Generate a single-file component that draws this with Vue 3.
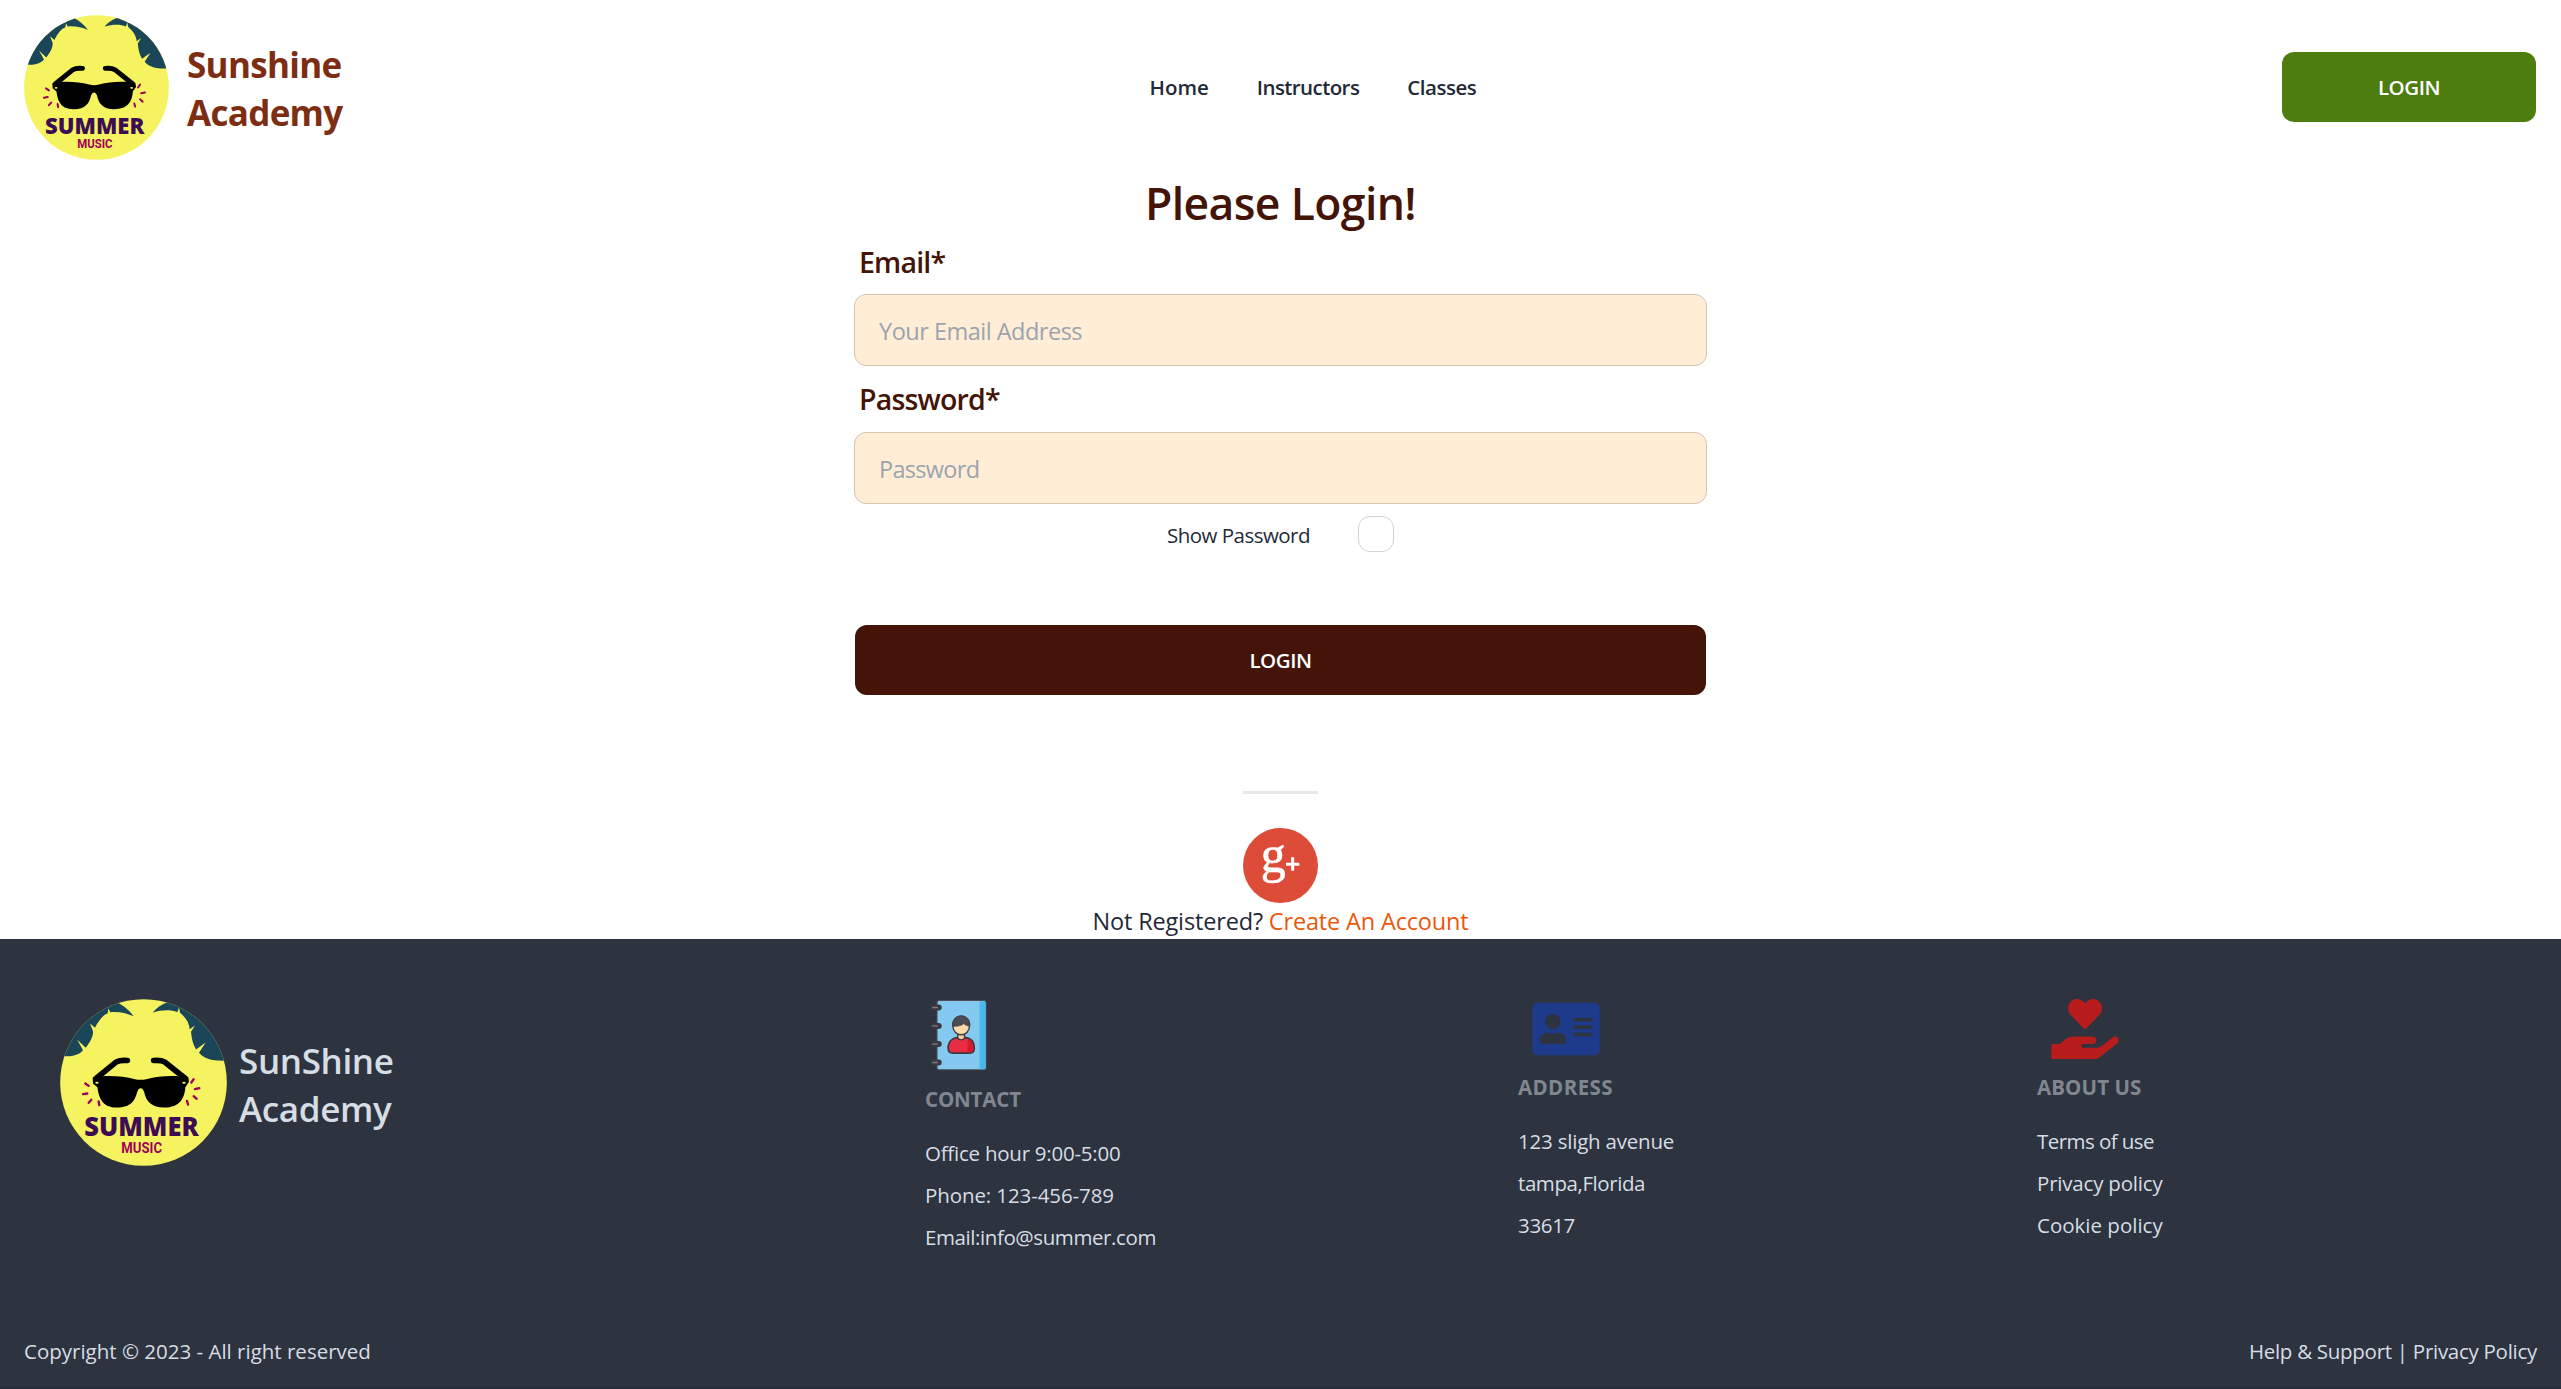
<script setup>
import { ref, h } from 'vue'

const navLinks = [
  { text: 'Home', fit: 'fit-home' },
  { text: 'Instructors', fit: 'fit-instructors' },
  { text: 'Classes', fit: 'fit-classes' },
]
const email = ref('')
const password = ref('')

const yellow = '#f5f35f'
const magenta = '#a0005a'

const SunLogo = () =>
  h('svg', { viewBox: '60 56 501 500', width: '100%', height: '100%', style: 'display:block', 'aria-label': 'Summer Music' }, [
    h('clipPath', { id: 'disc' }, [h('circle', { cx: 310.5, cy: 306, r: 250 })]),
    h('circle', { cx: 310.5, cy: 306, r: 250, fill: yellow }),
    h('g', { 'clip-path': 'url(#disc)', fill: '#1a4658' }, [
      h('path', { d: 'M50 224C85 231 115 226 129 209L112 178L137 202C153 182 160 166 159 152L150 129L165 142C177 118 190 103 203 98L205 84L211 95C238 93 258 98 281 107C266 88 252 76 232 66L50 30Z' }),
      h('path', { d: 'M338 96C368 87 394 88 412 95L417 81L420 97C438 112 448 128 449 146L465 135L453 154C455 176 459 192 468 207L497 186L477 217C494 237 520 243 570 240L570 30L380 66C362 73 349 83 338 96Z' }),
    ]),
    h('g', { fill: 'none', stroke: '#000', 'stroke-width': 17, 'stroke-linecap': 'round', 'stroke-linejoin': 'round' }, [
      h('path', { d: 'M262 240Q240 238 228 245L168 294' }),
      h('path', { d: 'M341 240Q363 238 375 245L436 294' }),
    ]),
    h('path', { d: 'M158 291C195 283 245 285 285 296Q302 300 319 296C358 285 410 283 445 291L447 304L436 320C434 352 420 381 372 381C332 381 318 360 313 336Q309 323 302 323Q295 323 291 336C285 360 273 381 231 381C186 381 177 352 172 320L159 309Z' }),
    h('ellipse', { cx: 171, cy: 307, rx: 5, ry: 3, fill: yellow }),
    h('ellipse', { cx: 432, cy: 307, rx: 5, ry: 3, fill: yellow }),
    h('path', { d: 'M136 309L146 316M129 341L142 339M154 358L146 367M176 363L178 374M461 296L454 306M465 326L478 323M461 347L470 355M441 361L444 372', stroke: magenta, 'stroke-width': 7, 'stroke-linecap': 'round' }),
    h('text', { x: 133, y: 465, 'font-size': 80, 'font-weight': 800, textLength: 343, lengthAdjust: 'spacingAndGlyphs', fill: '#3c0d54', 'font-family': 'Open Sans, sans-serif' }, 'SUMMER'),
    h('text', { x: 244, y: 516, 'font-size': 43, 'font-weight': 700, textLength: 122, lengthAdjust: 'spacingAndGlyphs', fill: magenta, 'font-family': 'Roboto, sans-serif' }, 'MUSIC'),
  ])
</script>

<template>
  <div class="page">
    <header class="top">
      <a class="brand">
        <span class="logo"><SunLogo /></span>
        <span class="brand-name">Sunshine<br />Academy</span>
      </a>
      <nav class="links">
        <a v-for="l in navLinks" :key="l.text" :class="l.fit">{{ l.text }}</a>
      </nav>
      <button class="btn btn-green">LOGIN</button>
    </header>

    <main class="login">
      <h1>Please Login!</h1>
      <label class="lab" for="email">Email*</label>
      <input id="email" v-model="email" type="text" placeholder="Your Email Address" />
      <label class="lab lab2" for="password">Password*</label>
      <input id="password" v-model="password" class="pw" type="text" placeholder="Password" />
      <div class="show">
        <span class="show-text">Show Password</span>
        <i class="check"></i>
      </div>
      <button class="btn btn-brown">LOGIN</button>
      <div class="rule"></div>
      <svg class="gplus" viewBox="0 0 225 225">
        <circle cx="112.500" cy="112.500" r="112.500" fill="#dd4b39" />
        <text x="53" y="133" font-size="158" font-family="Liberation Serif, serif" fill="#fff" stroke="#fff" stroke-width="2" textLength="75" lengthAdjust="spacingAndGlyphs">g</text>
        <path d="M129 108.500h40M149 88v40" stroke="#fff" stroke-width="9" />
      </svg>
      <p class="register">Not Registered? <a>Create An Account</a></p>
    </main>

    <footer>
      <div class="cols">
        <div class="fbrand">
          <span class="flogo"><SunLogo /></span>
          <span class="fname">SunShine<br />Academy</span>
        </div>
        <section class="contact">
          <svg class="book" viewBox="90 58 170 214">
            <rect x="111" y="62" width="146" height="207" rx="6" fill="#84c9ef" stroke="#4b4f5a" stroke-width="3" />
            <path d="M238 64h13q5 0 5 5v193q0 5-5 5h-13z" fill="#4ab8ec" />
            <g fill="#3a3942">
              <rect v-for="y in [83, 138, 192, 247]" :key="y" x="93" :y="y - 9" width="32" height="18" rx="9" />
            </g>
            <g fill="#7d7a80">
              <rect v-for="y in [83, 138, 192, 247]" :key="y" x="96" :y="y - 2" width="18" height="4" rx="2" />
            </g>
            <path d="M144 204c0-20 13-31 31-32v-8h16v8c19 1 31 12 31 32 0 10-5 15-13 15h-51c-9 0-14-5-14-15z" fill="#e82c43" stroke="#3a3942" stroke-width="5" />
            <path d="M203 176c12 5 17 15 17 28 0 8-4 13-10 13h-9z" fill="#d71929" />
            <path d="M173 164h20v11q-10 9-20 0z" fill="#fbd09b" stroke="#3a3942" stroke-width="4" />
            <path d="M158 136c0-36 50-36 50 0 0 18-11 28-25 28s-25-10-25-28z" fill="#fddaa9" stroke="#3a3942" stroke-width="4" />
            <path d="M157 139c-2-42 54-42 52 0-8-1-14-3-18-8-8 7-20 9-34 8z" fill="#4b4b52" stroke="#3a3942" stroke-width="2" />
          </svg>
          <h2 class="fit-contact">CONTACT</h2>
          <p class="fit-office">Office hour 9:00-5:00</p>
          <p class="fit-phone">Phone: 123-456-789</p>
          <p class="fit-mail">Email:info@summer.com</p>
        </section>
        <section class="address">
          <svg class="fa" viewBox="0 0 576 512" fill="#1e3a8a"><path d="M528 32H48C21.500 32 0 53.500 0 80v352c0 26.500 21.500 48 48 48h480c26.500 0 48-21.500 48-48V80c0-26.500-21.500-48-48-48zm-352 96c35.300 0 64 28.700 64 64s-28.700 64-64 64-64-28.700-64-64 28.700-64 64-64zm112 236.800c0 10.600-10 19.200-22.400 19.200H86.400C74 384 64 375.400 64 364.800v-19.200c0-31.800 30.100-57.600 67.200-57.600h5c12.300 5.100 25.700 8 39.800 8s27.600-2.900 39.800-8h5c37.100 0 67.200 25.800 67.200 57.600v19.200zM512 312c0 4.400-3.600 8-8 8H360c-4.400 0-8-3.600-8-8v-16c0-4.400 3.600-8 8-8h144c4.400 0 8 3.600 8 8v16zm0-64c0 4.400-3.600 8-8 8H360c-4.400 0-8-3.600-8-8v-16c0-4.400 3.600-8 8-8h144c4.400 0 8 3.600 8 8v16zm0-64c0 4.400-3.600 8-8 8H360c-4.400 0-8-3.600-8-8v-16c0-4.400 3.600-8 8-8h144c4.400 0 8 3.600 8 8v16z" /></svg>
          <h2 class="fit-address">ADDRESS</h2>
          <p class="fit-street">123 sligh avenue</p>
          <p class="fit-city">tampa,Florida</p>
          <p class="fit-zip">33617</p>
        </section>
        <section class="about">
          <svg class="fa" viewBox="0 0 576 512" fill="#b91c1c"><path d="M275.300 250.500c7 7.400 18.400 7.400 25.500 0l108.900-114.200c31.600-33.200 29.800-88.200-5.600-118.800-30.800-26.700-76.700-21.900-104.900 7.700L288 36.900l-11.100-11.600C248.700-4.400 202.800-9.200 172 17.500c-35.300 30.600-37.200 85.600-5.600 118.800l108.900 114.200zm290 77.600c-11.800-10.700-30.200-10-42.600 0L430.300 402c-11.300 9.100-25.400 14-40 14H272c-8.800 0-16-7.200-16-16s7.200-16 16-16h78.300c15.900 0 30.700-10.900 33.300-26.600 3.300-20-12.100-37.400-31.600-37.400H192c-27 0-53.100 9.300-74.100 26.300L71.400 384H16c-8.800 0-16 7.200-16 16v96c0 8.800 7.200 16 16 16h356.800c14.500 0 28.600-4.900 40-14L564 377c15.200-12.100 16.400-35.300 1.300-48.900z" /></svg>
          <h2 class="fit-about">ABOUT US</h2>
          <p class="fit-terms">Terms of use</p>
          <p class="fit-privacy">Privacy policy</p>
          <p>Cookie policy</p>
        </section>
      </div>
      <div class="legal">
        <span>Copyright © 2023 - All right reserved</span>
        <span class="fit-help">Help &amp; Support | Privacy Policy</span>
      </div>
    </footer>
  </div>
</template>

<style>
body { background: #fff; }
</style>

<style scoped>
* { box-sizing: border-box; }
.page { height: 1389px; overflow: hidden; font-family: "Open Sans", "Noto Sans", sans-serif; font-size: 20.5px; color: #1f2937; }
h1, h2, p { margin: 0; }
svg { display: block; }

.top { height: 174px; padding: 0 25px 0 24px; display: flex; align-items: center; }
.brand { display: flex; align-items: center; flex: 0 0 1125.5px; }
.logo { width: 145px; height: 145px; }
.brand-name { margin-left: 18px; padding-top: 3px; font-size: 35px; line-height: 48px; font-weight: 700; letter-spacing: -0.7px; color: #7c2d12; }
.links { display: flex; gap: 48px; font-weight: 600; }
.fit-instructors { letter-spacing: -0.58px; }
.fit-classes { letter-spacing: -0.48px; }

.btn { height: 70px; border: 0; border-radius: 12px; color: #fff; font: 600 20.5px/69px "Open Sans", "Noto Sans", sans-serif; letter-spacing: -0.45px; padding: 1px 0 0; }
.btn-green { width: 254px; margin-left: auto; background: #4d7c0f; }

.login { width: 853px; height: 765px; margin: 0 auto; display: flex; flex-direction: column; align-items: center; }
h1 { font-size: 44.5px; line-height: 57px; height: 56px; font-weight: 600; letter-spacing: -0.62px; color: #431407; }
.lab { align-self: stretch; height: 64px; line-height: 64px; padding-left: 5px; font-size: 28.5px; font-weight: 600; letter-spacing: -0.82px; color: #431407; }
.lab2 { height: 66px; padding-top: 1px; }
input { width: 853px; height: 72px; flex: none; border: 1px solid #d2c5b4; border-radius: 12px; background: #ffedd5; padding: 1px 24px 0; font: 23.5px "Open Sans", "Noto Sans", sans-serif; letter-spacing: -0.5px; color: #1f2937; outline: 0; }
.pw { letter-spacing: -0.7px; }
input::placeholder { color: #9ca3af; opacity: 1; }
.show { margin-top: 12px; height: 36px; display: flex; align-items: center; gap: 48px; }
.show-text { padding-top: 1px; letter-spacing: -0.52px; }
.check { width: 36px; height: 36px; border: 1px solid #d2d4d7; border-radius: 12px; }
.btn-brown { width: 851px; margin-top: 73px; flex: none; background: #431407; }
.rule { width: 75px; height: 3px; margin-top: 96px; background: #e8e8e8; flex: none; }
.gplus { width: 75px; height: 75px; margin-top: 34px; flex: none; }
.register { font-size: 23.5px; line-height: 36px; letter-spacing: -0.16px; white-space: nowrap; }
.register a { color: #ea580c; }

footer { height: 450px; background: #2d3440; color: #d7dde4; border-bottom: 2px solid #272e39; }
.cols { height: 366px; padding-top: 60px; display: flex; align-items: flex-start; }
.fbrand { width: 925px; padding-left: 60px; display: flex; align-items: center; height: 167px; }
.flogo { width: 167px; height: 167px; }
.fname { margin-left: 12px; padding-top: 4px; font-size: 35px; line-height: 48px; font-weight: 600; letter-spacing: -0.36px; }
section h2 { font-size: 20.5px; line-height: 30px; font-weight: 700; color: #818790; margin: 13px 0 24px; }
section p { line-height: 30px; margin-bottom: 12px; white-space: nowrap; }
.contact { width: 593px; }
.address { width: 519px; }
.book { width: 57px; height: 72px; margin-left: 5px; }
.fa { width: 68px; height: 60px; margin-left: 14px; overflow: visible; }
.legal { display: flex; justify-content: space-between; padding: 31px 24px 0; line-height: 30px; }

.fit-contact { letter-spacing: -0.14px; }
.fit-address { letter-spacing: 0.4px; }
.fit-about { letter-spacing: 0.1px; }
.fit-office { letter-spacing: -0.24px; }
.fit-phone { letter-spacing: -0.1px; }
.fit-mail { letter-spacing: -0.41px; }
.fit-street { letter-spacing: -0.21px; }
.fit-city { letter-spacing: -0.42px; }
.fit-zip { letter-spacing: -0.32px; }
.fit-terms { letter-spacing: -0.56px; }
.fit-privacy { letter-spacing: -0.2px; }
.fit-help { letter-spacing: -0.28px; }
</style>
